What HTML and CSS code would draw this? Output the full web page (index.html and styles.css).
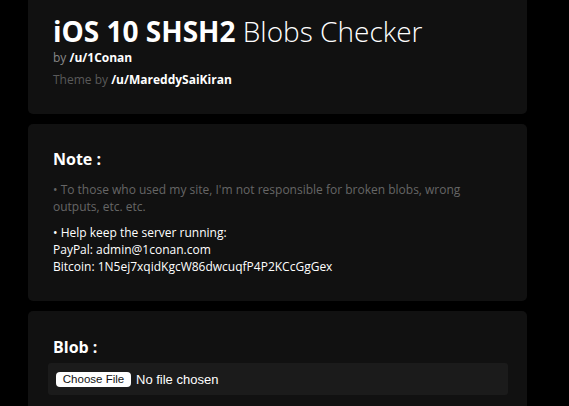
FILE: index.html
```html
<!DOCTYPE html>
<html lang="en">
<head>
<meta charset="utf-8">
<title>iOS 10 SHSH2 Blobs Checker</title>
<link rel="stylesheet" href="styles.css">
</head>
<body>
<main class="page">
  <section class="card card-head">
    <h1 class="title"><strong>iOS 10 SHSH2</strong> Blobs Checker</h1>
    <p class="byline">by <a href="#">/u/1Conan</a></p>
    <p class="theme">Theme by <a href="#">/u/MareddySaiKiran</a></p>
  </section>
  <section class="card card-note">
    <h2 class="heading">Note :</h2>
    <p class="muted">&bull; To those who used my site, I'm not responsible for broken blobs, wrong outputs, etc. etc.</p>
    <p class="donate">&bull; Help keep the server running:<br>PayPal: admin@1conan.com<br>Bitcoin: 1N5ej7xqidKgcW86dwcuqfP4P2KCcGgGex</p>
  </section>
  <section class="card card-blob">
    <h2 class="heading">Blob :</h2>
    <div class="file-box">
      <label class="file-btn">Choose File</label>
      <span class="file-name">No file chosen</span>
    </div>
  </section>
</main>
</body>
</html>
```
FILE: styles.css
```css
html, body {
  margin: 0;
  padding: 0;
  background: #000;
}
body {
  font-family: "Open Sans", "Noto Sans", sans-serif;
  color: #fff;
  overflow: hidden;
}
.page {
  margin-top: -10px;
  margin-left: 28px;
  width: 499px;
  display: flex;
  flex-direction: column;
  gap: 10px;
}
.card {
  background: #111;
  border-radius: 5px;
}
.card-head {
  padding: 24px 25px 26px;
}
.title {
  margin: 0;
  font-size: 28px;
  line-height: 34px;
  font-weight: 300;
}
.title strong {
  font-weight: 700;
}
.byline, .theme {
  margin: 0;
  font-size: 12px;
  line-height: 17px;
  color: #888;
}
.byline { margin-top: 1px; }
.theme { margin-top: 5px; color: #5a5a5a; }
.byline a, .theme a {
  color: #fff;
  font-weight: 700;
  text-decoration: none;
}
.card-note {
  padding: 24px 25px 26px;
}
.heading {
  margin: 0;
  font-size: 16px;
  line-height: 22px;
  font-weight: 700;
}
.muted {
  margin: 11px 0 0;
  font-size: 12px;
  line-height: 17px;
  color: #666;
}
.donate {
  margin: 9px 0 0;
  font-size: 12px;
  line-height: 17px;
  color: #fff;
}
.card-blob {
  padding: 25px 19px 30px 20px;
}
.card-blob .heading {
  padding-left: 5px;
}
.file-box {
  margin-top: 5px;
  height: 32px;
  background: #1b1b1b;
  border-radius: 3px;
  display: flex;
  align-items: center;
  gap: 5px;
  padding: 0 8px;
  font-family: "Liberation Sans", Arial, sans-serif;
}
.file-btn {
  background: #fff;
  color: #111;
  border-radius: 4px;
  height: 15px;
  width: 75px;
  display: flex;
  align-items: center;
  justify-content: center;
  font-size: 11.5px;
}
.file-name {
  font-size: 13px;
  color: #fff;
}
```
